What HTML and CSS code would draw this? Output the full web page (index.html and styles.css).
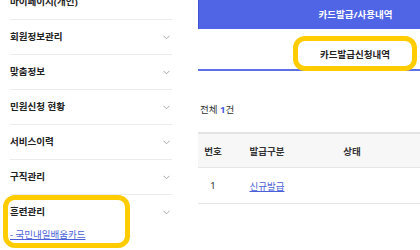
FILE: index.html
```html
<!DOCTYPE html>
<html lang="ko">
<head>
    <meta charset="UTF-8">
    <meta name="viewport" content="width=device-width, initial-scale=1.0">
    <title>카드발급신청내역</title>
    <link rel="stylesheet" href="styles.css">
</head>
<body>
    <div class="page">
        <nav class="side">
            <ul class="menu">
                <li class="menu-item"><span class="menu-title">마이페이지(개인)</span></li>
                <li class="menu-item">
                    <span class="menu-title">회원정보관리</span>
                    <svg class="chev" width="7" height="5" viewBox="0 0 7 5"><polyline points="0.5,0.8 3.5,3.8 6.5,0.8" /></svg>
                </li>
                <li class="menu-item">
                    <span class="menu-title">맞춤정보</span>
                    <svg class="chev" width="7" height="5" viewBox="0 0 7 5"><polyline points="0.5,0.8 3.5,3.8 6.5,0.8" /></svg>
                </li>
                <li class="menu-item">
                    <span class="menu-title">민원신청 현황</span>
                    <svg class="chev" width="7" height="5" viewBox="0 0 7 5"><polyline points="0.5,0.8 3.5,3.8 6.5,0.8" /></svg>
                </li>
                <li class="menu-item">
                    <span class="menu-title">서비스이력</span>
                    <svg class="chev" width="7" height="5" viewBox="0 0 7 5"><polyline points="0.5,0.8 3.5,3.8 6.5,0.8" /></svg>
                </li>
                <li class="menu-item">
                    <span class="menu-title">구직관리</span>
                    <svg class="chev" width="7" height="5" viewBox="0 0 7 5"><polyline points="0.5,0.8 3.5,3.8 6.5,0.8" /></svg>
                </li>
                <li class="menu-item open">
                    <div class="menu-head">
                        <span class="menu-title">훈련관리</span>
                        <svg class="chev" width="7" height="5" viewBox="0 0 7 5"><polyline points="0.5,0.8 3.5,3.8 6.5,0.8" /></svg>
                    </div>
                    <a class="sub-link" href="#">- 국민내일배움카드</a>
                </li>
            </ul>
            <div class="mark mark-side"></div>
        </nav>

        <main class="main">
            <div class="tab-top">카드발급/사용내역</div>
            <div class="tab-sub">
                <span>카드발급신청내역</span>
            </div>
            <div class="mark mark-tab"></div>

            <p class="count">전체 <strong>1</strong>건</p>

            <table class="list">
                <colgroup>
                    <col class="c-no">
                    <col class="c-type">
                    <col class="c-state">
                    <col>
                </colgroup>
                <thead>
                    <tr>
                        <th>번호</th>
                        <th>발급구분</th>
                        <th>상태</th>
                        <th></th>
                    </tr>
                </thead>
                <tbody>
                    <tr>
                        <td>1</td>
                        <td><a href="#">신규발급</a></td>
                        <td></td>
                        <td></td>
                    </tr>
                </tbody>
            </table>
        </main>
    </div>
</body>
</html>
```

FILE: styles.css
```css
body {
    margin: 0;
    padding: 0;
    background-color: #fff;
    font-family: "Noto Sans", "Noto Sans CJK KR", sans-serif;
    color: #222;
    overflow: hidden;
}

.page {
    position: relative;
    display: flex;
    align-items: flex-start;
    width: 420px;
    height: 250px;
    overflow: hidden;
}

/* left menu */
.side {
    flex: 0 0 162px;
    margin-left: 10px;
    margin-top: -15px;
}

.menu {
    list-style: none;
    margin: 0;
    padding: 0;
}

.menu-item,
.menu-head {
    display: flex;
    align-items: center;
    justify-content: space-between;
    height: 34px;
    border-bottom: 1px solid #ececec;
    font-size: 9.5px;
    font-weight: bold;
}

.menu-item.open {
    display: block;
    height: auto;
    border-bottom: none;
}

.menu-head {
    border-bottom: none;
}

.menu-title {
    line-height: 12px;
}

.chev {
    margin-right: 2px;
    fill: none;
    stroke: #a8a8a8;
    stroke-width: 1;
}

.sub-link {
    display: block;
    line-height: 12px;
    font-size: 9.5px;
    font-weight: normal;
    color: #4b5fd9;
}

/* main area */
.main {
    flex: 0 0 314px;
    margin-left: 26px;
}

.tab-top {
    height: 29px;
    line-height: 29px;
    background-color: #5065e6;
    border-left: 1px solid #3e52d4;
    box-sizing: border-box;
    color: #fff;
    font-size: 9.5px;
    font-weight: bold;
    text-align: center;
}

.tab-sub {
    padding: 20px 0 8px;
    border-bottom: 2px solid #5b6fe8;
    text-align: center;
    font-size: 9.5px;
    font-weight: bold;
    line-height: 12px;
    color: #222;
}

.count {
    margin: 33px 0 16px 2px;
    font-size: 9.5px;
    line-height: 12px;
    color: #333;
}

.count strong {
    color: #4458e0;
}

.list {
    width: 314px;
    table-layout: fixed;
    border-collapse: collapse;
    font-size: 9.5px;
}

.c-no { width: 30px; }
.c-type { width: 78px; }
.c-state { width: 92px; }

.list th {
    height: 33px;
    padding: 0;
    background-color: #f7f7f7;
    border-top: 2px solid #e4e4e4;
    border-bottom: 1px solid #e6e6e6;
    font-weight: bold;
    color: #333;
    text-align: center;
}

.list td {
    height: 35px;
    padding: 0;
    border-bottom: 1px solid #e6e6e6;
    text-align: center;
    color: #333;
}

.list td a {
    color: #4b5fd9;
}

/* yellow highlight marks over the content */
.mark {
    position: absolute;
    border: 5px solid #ffcc00;
    border-radius: 12px;
    box-sizing: border-box;
}

.mark-side {
    left: 3px;
    top: 195px;
    width: 127px;
    height: 53px;
}

.mark-tab {
    left: 293px;
    top: 36px;
    width: 124px;
    height: 35px;
}
```
